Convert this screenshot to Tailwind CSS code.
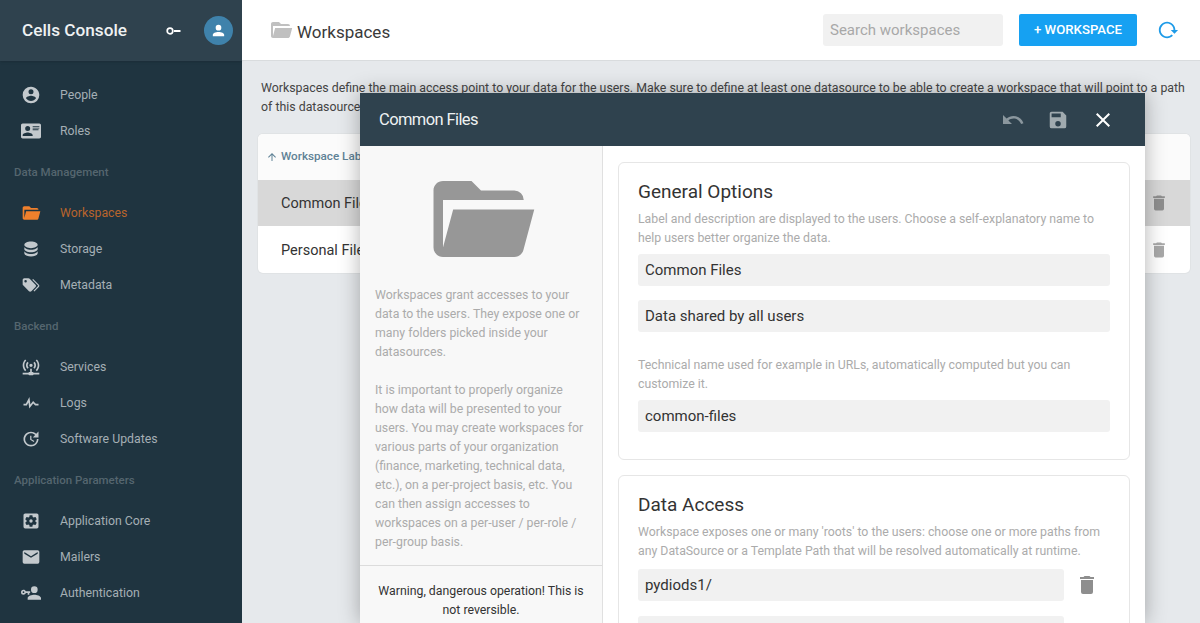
<!DOCTYPE html>
<html lang="en">
<head>
  <meta charset="UTF-8" />
  <title>Cells Console</title>
  <script src="https://cdn.jsdelivr.net/npm/@tailwindcss/browser@4"></script>
</head>
<body class="relative flex h-[623px] w-[1200px] overflow-hidden bg-[#e6e9ec] font-[Roboto,sans-serif]">

  <!-- Sidebar -->
  <aside class="flex w-[242px] shrink-0 flex-col bg-[#1f3440]">
    <div class="flex h-[61px] items-center bg-[#2f424e] pl-[22px] shadow-sm">
      <span class="w-[143px] text-[17.2px] font-medium text-[#eef1f2]">Cells Console</span>
      <svg class="h-[16px] w-[18px]" viewBox="0 0 18 16"><circle cx="5" cy="8" r="2.8" fill="none" stroke="#fff" stroke-width="1.7"/><rect x="9" y="7" width="6.5" height="2" fill="#fff"/></svg>
      <div class="ml-[21px] flex h-[29px] w-[29px] items-center justify-center rounded-full bg-[#3f82ab]">
        <svg class="h-[17px] w-[17px] fill-white" viewBox="0 0 24 24"><path d="M12,4A4,4 0 0,1 16,8A4,4 0 0,1 12,12A4,4 0 0,1 8,8A4,4 0 0,1 12,4M12,14C16.42,14 20,15.79 20,18V20H4V18C4,15.79 7.58,14 12,14Z"/></svg>
      </div>
    </div>

    <nav class="pt-[16px] text-[12.3px] text-[#a5afb5]">
      <div class="flex h-[36px] items-center"><svg class="ml-[21px] mr-[19px] h-[20px] w-[20px] fill-[#c3c9cd]" viewBox="0 0 24 24"><path d="M12,19.2C9.5,19.2 7.29,17.92 6,16C6.03,14 10,12.9 12,12.9C14,12.9 17.97,14 18,16C16.71,17.92 14.5,19.2 12,19.2M12,5A3,3 0 0,1 15,8A3,3 0 0,1 12,11A3,3 0 0,1 9,8A3,3 0 0,1 12,5M12,2A10,10 0 0,0 2,12A10,10 0 0,0 12,22A10,10 0 0,0 22,12C22,6.47 17.5,2 12,2Z"/></svg>People</div>
      <div class="flex h-[36px] items-center"><svg class="ml-[21px] mr-[19px] h-[20px] w-[20px] fill-[#c3c9cd]" viewBox="0 0 24 24"><path d="M2,3H22C23.05,3 24,3.95 24,5V19C24,20.05 23.05,21 22,21H2C0.95,21 0,20.05 0,19V5C0,3.95 0.95,3 2,3M14,6V7H22V6H14M14,8V9H21.5L22,9V8H14M14,10V11H21V10H14M8,13.91C6,13.91 2,15 2,17V18H14V17C14,15 10,13.91 8,13.91M8,6A3,3 0 0,0 5,9A3,3 0 0,0 8,12A3,3 0 0,0 11,9A3,3 0 0,0 8,6Z"/></svg>Roles</div>

      <div class="flex h-[46px] items-center pl-[14px] pt-[2px] text-[11.5px] font-medium text-[#55666f]">Data Management</div>
      <div class="flex h-[36px] items-center text-[#b9642c]"><svg class="ml-[21px] mr-[19px] h-[20px] w-[20px] fill-[#f0802c]" viewBox="0 0 24 24"><path d="M19,20H4C2.89,20 2,19.1 2,18V6C2,4.89 2.89,4 4,4H10L12,6H19A2,2 0 0,1 21,8H21L4,8V18L6.14,10H23.21L20.93,18.5C20.7,19.37 19.92,20 19,20Z"/></svg>Workspaces</div>
      <div class="flex h-[36px] items-center"><svg class="ml-[21px] mr-[19px] h-[20px] w-[20px] fill-[#c3c9cd]" viewBox="0 0 24 24"><path d="M12,3C7.58,3 4,4.79 4,7C4,9.21 7.58,11 12,11C16.42,11 20,9.21 20,7C20,4.79 16.42,3 12,3M4,9V12C4,14.21 7.58,16 12,16C16.42,16 20,14.21 20,12V9C20,11.21 16.42,13 12,13C7.58,13 4,11.21 4,9M4,14V17C4,19.21 7.58,21 12,21C16.42,21 20,19.21 20,17V14C20,16.21 16.42,18 12,18C7.58,18 4,16.21 4,14Z"/></svg>Storage</div>
      <div class="flex h-[36px] items-center"><svg class="ml-[21px] mr-[19px] h-[20px] w-[20px] fill-[#c3c9cd]" viewBox="0 0 24 24"><path d="M5.5,9A1.5,1.5 0 0,0 7,7.5A1.5,1.5 0 0,0 5.5,6A1.5,1.5 0 0,0 4,7.5A1.5,1.5 0 0,0 5.5,9M17.41,11.58C17.77,11.94 18,12.44 18,13C18,13.55 17.78,14.05 17.41,14.41L12.41,19.41C12.05,19.77 11.55,20 11,20C10.45,20 9.95,19.78 9.58,19.41L2.59,12.42C2.22,12.05 2,11.55 2,11V6C2,4.89 2.89,4 4,4H9C9.55,4 10.05,4.22 10.41,4.58L17.41,11.58M13.54,5.71L14.54,4.71L21.41,11.58C21.78,11.94 22,12.45 22,13C22,13.55 21.78,14.05 21.42,14.41L16.04,19.79L15.04,18.79L20.75,13L13.54,5.71Z"/></svg>Metadata</div>

      <div class="flex h-[46px] items-center pl-[14px] pt-[2px] text-[11.5px] font-medium text-[#55666f]">Backend</div>
      <div class="flex h-[36px] items-center"><svg class="ml-[21px] mr-[19px] h-[20px] w-[20px] fill-[#c3c9cd]" viewBox="0 0 24 24"><path d="M4.93,2.93C3.12,4.74 2,7.24 2,10C2,12.76 3.12,15.26 4.93,17.07L6.34,15.66C4.89,14.22 4,12.22 4,10C4,7.79 4.89,5.78 6.34,4.34L4.93,2.93M19.07,2.93L17.66,4.34C19.11,5.78 20,7.79 20,10C20,12.22 19.11,14.22 17.66,15.66L19.07,17.07C20.88,15.26 22,12.76 22,10C22,7.24 20.88,4.74 19.07,2.93M7.76,5.76C6.67,6.85 6,8.35 6,10C6,11.65 6.67,13.15 7.76,14.24L9.17,12.83C8.45,12.11 8,11.11 8,10C8,8.89 8.45,7.89 9.17,7.17L7.76,5.76M16.24,5.76L14.83,7.17C15.55,7.89 16,8.89 16,10C16,11.11 15.55,12.11 14.83,12.83L16.24,14.24C17.33,13.15 18,11.65 18,10C18,8.35 17.33,6.85 16.24,5.76M12,8A2,2 0 0,0 10,10A2,2 0 0,0 12,12A2,2 0 0,0 14,10A2,2 0 0,0 12,8M11,14V18H10A1,1 0 0,0 9,19H2V21H9A1,1 0 0,0 10,22H14A1,1 0 0,0 15,21H22V19H15A1,1 0 0,0 14,18H13V14H11Z"/></svg>Services</div>
      <div class="flex h-[36px] items-center"><svg class="ml-[21px] mr-[19px] h-[20px] w-[20px] fill-[#c3c9cd]" viewBox="0 0 24 24"><path d="M3,13H5.79L10.1,4.79L11.28,13.75L14.5,9.66L17.83,13H21V15H17L14.67,12.67L9.92,18.73L8.94,11.31L7,15H3V13Z"/></svg>Logs</div>
      <div class="flex h-[36px] items-center"><svg class="ml-[21px] mr-[19px] h-[20px] w-[20px] fill-[#c3c9cd]" viewBox="0 0 24 24"><path d="M21,10.12H14.22L16.96,7.3C14.23,4.6 9.81,4.5 7.08,7.2C4.35,9.91 4.35,14.28 7.08,17C9.81,19.7 14.23,19.7 16.96,17C18.32,15.65 19,14.08 19,12.1H21C21,14.08 20.12,16.65 18.36,18.39C14.85,21.87 9.15,21.87 5.64,18.39C2.14,14.92 2.11,9.28 5.62,5.81C9.13,2.34 14.76,2.34 18.27,5.81L21,3V10.12M12.5,8V12.25L16,14.33L15.28,15.54L11,13V8H12.5Z"/></svg>Software Updates</div>

      <div class="flex h-[46px] items-center pl-[14px] pt-[2px] text-[11.5px] font-medium text-[#55666f]">Application Parameters</div>
      <div class="flex h-[36px] items-center"><svg class="ml-[21px] mr-[19px] h-[20px] w-[20px] fill-[#c3c9cd]" viewBox="0 0 24 24"><path d="M17.25,12C17.25,12.23 17.23,12.46 17.2,12.68L18.68,13.84C18.81,13.95 18.85,14.13 18.76,14.29L17.36,16.71C17.27,16.86 17.09,16.92 16.93,16.86L15.19,16.16C14.83,16.44 14.43,16.67 14,16.85L13.75,18.7C13.72,18.87 13.57,19 13.4,19H10.6C10.43,19 10.28,18.87 10.25,18.7L10,16.85C9.56,16.67 9.17,16.44 8.81,16.16L7.07,16.86C6.91,16.92 6.73,16.86 6.64,16.71L5.24,14.29C5.15,14.13 5.19,13.95 5.32,13.84L6.8,12.68C6.77,12.46 6.75,12.23 6.75,12C6.75,11.77 6.77,11.54 6.8,11.32L5.32,10.16C5.19,10.05 5.15,9.86 5.24,9.71L6.64,7.29C6.73,7.13 6.91,7.07 7.07,7.13L8.81,7.84C9.17,7.56 9.56,7.32 10,7.15L10.25,5.29C10.28,5.13 10.43,5 10.6,5H13.4C13.57,5 13.72,5.13 13.75,5.29L14,7.15C14.43,7.32 14.83,7.56 15.19,7.84L16.93,7.13C17.09,7.07 17.27,7.13 17.36,7.29L18.76,9.71C18.85,9.86 18.81,10.05 18.68,10.16L17.2,11.32C17.23,11.54 17.25,11.77 17.25,12M19,3H5C3.89,3 3,3.89 3,5V19A2,2 0 0,0 5,21H19A2,2 0 0,0 21,19V5C21,3.89 20.1,3 19,3M12,10C10.89,10 10,10.89 10,12A2,2 0 0,0 12,14A2,2 0 0,0 14,12C14,10.89 13.1,10 12,10Z"/></svg>Application Core</div>
      <div class="flex h-[36px] items-center"><svg class="ml-[21px] mr-[19px] h-[20px] w-[20px] fill-[#c3c9cd]" viewBox="0 0 24 24"><path d="M20,8L12,13L4,8V6L12,11L20,6M20,4H4C2.89,4 2,4.89 2,6V18A2,2 0 0,0 4,20H20A2,2 0 0,0 22,18V6C22,4.89 21.1,4 20,4Z"/></svg>Mailers</div>
      <div class="flex h-[36px] items-center"><svg class="ml-[21px] mr-[19px] h-[20px] w-[20px] fill-[#c3c9cd]" viewBox="0 0 24 24"><path d="M11,10V12H10V14H8V12H5.83C5.42,13.17 4.31,14 3,14A3,3 0 0,1 0,11A3,3 0 0,1 3,8C4.31,8 5.42,8.83 5.83,10H11M3,10A1,1 0 0,0 2,11A1,1 0 0,0 3,12A1,1 0 0,0 4,11A1,1 0 0,0 3,10M16,14C18.67,14 24,15.34 24,18V20H8V18C8,15.34 13.33,14 16,14M16,12A4,4 0 0,1 12,8A4,4 0 0,1 16,4A4,4 0 0,1 20,8A4,4 0 0,1 16,12Z"/></svg>Authentication</div>
    </nav>
  </aside>

  <!-- Main column -->
  <main class="flex min-w-0 flex-1 flex-col">
    <header class="flex h-[61px] shrink-0 items-center border-b border-[#d9dcde] bg-white pl-[27px]">
      <svg class="h-[24px] w-[24px] fill-[#c0c0c0]" viewBox="0 0 24 24"><path d="M19,20H4C2.89,20 2,19.1 2,18V6C2,4.89 2.89,4 4,4H10L12,6H19A2,2 0 0,1 21,8H21L4,8V18L6.14,10H23.21L20.93,18.5C20.7,19.37 19.92,20 19,20Z"/></svg>
      <h1 class="ml-[4px] flex-1 pt-[5px] text-[17px] text-[#3a3a3a]">Workspaces</h1>
      <div class="flex h-[32px] w-[180px] items-center rounded-[3px] bg-[#f1f1f1] px-[7px] text-[15px] text-[#a8a8a8]">Search workspaces</div>
      <button class="ml-[16px] h-[32px] w-[118px] rounded-[2px] bg-[#16a1f2] text-[13.2px] font-medium text-white">+ WORKSPACE</button>
      <svg class="ml-[20px] mr-[21px] h-[22px] w-[22px] fill-[#1e9be8]" viewBox="0 0 24 24"><path d="M2 12C2 16.97 6.03 21 11 21C13.39 21 15.68 20.06 17.4 18.4L15.9 16.9C14.63 18.25 12.86 19 11 19C4.76 19 1.64 11.46 6.05 7.05C10.46 2.64 18 5.77 18 12H15L19 16H19.1L23 12H20C20 7.03 15.97 3 11 3C6.03 3 2 7.03 2 12Z"/></svg>
    </header>

    <div class="pl-[16px] pr-[10px]">
      <p class="mb-[17px] mt-[18px] pl-[3px] text-[12.35px] leading-[19px] text-[#444]">Workspaces define the main access point to your data for the users. Make sure to define at least one datasource to be able to create a workspace that will point to a path of this datasource.</p>
      <div class="overflow-hidden rounded-[5px] bg-white shadow-[0_0_0_1px_#e0e3e5]">
        <div class="flex h-[46px] items-center bg-[#fbfbfb] pl-[8px] text-[11.7px] font-medium text-[#5f8296]">
          <svg class="mr-[3px] h-[12px] w-[12px] fill-[#5f8296]" viewBox="0 0 24 24"><path d="M13,20H11V8L5.5,13.5L4.08,12.08L12,4.16L19.92,12.08L18.5,13.5L13,8V20Z"/></svg>
          Workspace Label
        </div>
        <div class="flex h-[46px] items-center justify-between bg-[#d8d8d8] pl-[23px] pr-[21px] text-[14.5px] text-[#333]"><span class="pt-[2px]">Common Files</span>
          <svg class="h-[20px] w-[20px] fill-[#8e8e8e]" viewBox="0 0 24 24"><path d="M19,4H15.5L14.5,3H9.5L8.5,4H5V6H19M6,19A2,2 0 0,0 8,21H16A2,2 0 0,0 18,19V7H6V19Z"/></svg>
        </div>
        <div class="mt-px flex h-[46px] items-center justify-between pl-[23px] pr-[21px] text-[14.5px] text-[#333]"><span class="pt-[2px]">Personal Files</span>
          <svg class="h-[20px] w-[20px] fill-[#a8a8a8]" viewBox="0 0 24 24"><path d="M19,4H15.5L14.5,3H9.5L8.5,4H5V6H19M6,19A2,2 0 0,0 8,21H16A2,2 0 0,0 18,19V7H6V19Z"/></svg>
        </div>
      </div>
    </div>
  </main>

  <!-- Workspace editor panel -->
  <section class="absolute left-[360px] top-[93px] flex h-[530px] w-[785px] flex-col overflow-hidden bg-white shadow-[0_0_20px_rgba(0,0,0,0.3)]">
    <div class="flex h-[53px] shrink-0 items-center bg-[#2f424e] pl-[19px]">
      <span class="flex-1 pt-[2px] text-[16.5px] tracking-[-0.6px] text-[#eef1f2]">Common Files</span>
      <svg class="h-[24px] w-[24px] fill-[#8b979e]" viewBox="0 0 24 24"><path d="M12.5,8C9.85,8 7.45,9 5.6,10.6L2,7V16H11L7.38,12.38C8.77,11.22 10.54,10.5 12.5,10.5C16.04,10.5 19.05,12.81 20.1,16L22.47,15.22C21.08,11.03 17.15,8 12.5,8Z"/></svg>
      <svg class="ml-[22px] h-[22px] w-[22px] fill-[#a0aaaf]" viewBox="0 0 24 24"><path d="M15,9H5V5H15M12,19A3,3 0 0,1 9,16A3,3 0 0,1 12,13A3,3 0 0,1 15,16A3,3 0 0,1 12,19M17,3H5C3.89,3 3,3.9 3,5V19A2,2 0 0,0 5,21H19A2,2 0 0,0 21,19V7L17,3Z"/></svg>
      <svg class="ml-[22px] mr-[30px] h-[24px] w-[24px] fill-white" viewBox="0 0 24 24"><path d="M19,6.41L17.59,5L12,10.59L6.41,5L5,6.41L10.59,12L5,17.59L6.41,19L12,13.41L17.59,19L19,17.59L13.41,12L19,6.41Z"/></svg>
    </div>

    <div class="flex min-h-0 flex-1">
      <!-- Left help pane -->
      <div class="flex w-[243px] shrink-0 flex-col border-r border-[#e0e0e0] bg-[#f8f8f8]">
        <svg class="ml-[64px] mt-[16px] h-[114px] w-[114px] shrink-0 fill-[#979797]" viewBox="0 0 24 24"><path d="M19,20H4C2.89,20 2,19.1 2,18V6C2,4.89 2.89,4 4,4H10L12,6H19A2,2 0 0,1 21,8H21L4,8V18L6.14,10H23.21L20.93,18.5C20.7,19.37 19.92,20 19,20Z"/></svg>
        <div class="mt-[10px] h-[280px] border-b border-[#dcdcdc] pl-[15px] pr-[16px] text-[12.3px] leading-[19px] text-[#ababab]">
          <p class="mb-[19px]">Workspaces grant accesses to your data to the users. They expose one or many folders picked inside your datasources.</p>
          <p>It is important to properly organize how data will be presented to your users. You may create workspaces for various parts of your organization (finance, marketing, technical data, etc.), on a per-project basis, etc. You can then assign accesses to workspaces on a per-user / per-role / per-group basis.</p>
        </div>
        <p class="px-[15px] pt-[16px] text-center text-[12.3px] leading-[19px] text-[#333]">Warning, dangerous operation! This is not reversible.</p>
      </div>

      <!-- Right form pane -->
      <div class="flex-1 overflow-hidden px-[15px] pt-[16px]">
        <div class="h-[298px] rounded-[6px] border border-[#e6e6e6] px-[19px] pt-[16px]">
          <h2 class="text-[19px] leading-[26px] text-[#333]">General Options</h2>
          <p class="mt-[5px] text-[12.3px] leading-[19px] text-[#ababab]">Label and description are displayed to the users. Choose a self-explanatory name to help users better organize the data.</p>
          <div class="mt-[6px] flex h-[32px] items-center rounded-[3px] bg-[#f1f1f1] px-[7px] text-[15px] text-[#333]">Common Files</div>
          <div class="mt-[14px] flex h-[32px] items-center rounded-[3px] bg-[#f1f1f1] px-[7px] text-[15px] text-[#333]">Data shared by all users</div>
          <p class="mt-[24px] text-[12.3px] leading-[19px] text-[#ababab]">Technical name used for example in URLs, automatically computed but you can customize it.</p>
          <div class="mt-[6px] flex h-[32px] items-center rounded-[3px] bg-[#f1f1f1] px-[7px] text-[15px] text-[#333]">common-files</div>
        </div>
        <div class="mt-[15px] h-[300px] rounded-[6px] border border-[#e6e6e6] px-[19px] pt-[16px]">
          <h2 class="text-[19px] leading-[26px] text-[#333]">Data Access</h2>
          <p class="mt-[5px] text-[12.3px] leading-[19px] text-[#ababab]">Workspace exposes one or many 'roots' to the users: choose one or more paths from any DataSource or a Template Path that will be resolved automatically at runtime.</p>
          <div class="mt-[8px] flex items-center">
            <div class="flex h-[32px] w-[426px] items-center rounded-[3px] bg-[#f1f1f1] px-[7px] text-[15px] text-[#333]">pydiods1/</div>
            <svg class="ml-[11px] h-[24px] w-[24px] fill-[#8e8e8e]" viewBox="0 0 24 24"><path d="M19,4H15.5L14.5,3H9.5L8.5,4H5V6H19M6,19A2,2 0 0,0 8,21H16A2,2 0 0,0 18,19V7H6V19Z"/></svg>
          </div>
          <div class="mt-[15px] h-[32px] w-[426px] rounded-[3px] bg-[#f1f1f1]"></div>
        </div>
      </div>
    </div>
  </section>
</body>
</html>
